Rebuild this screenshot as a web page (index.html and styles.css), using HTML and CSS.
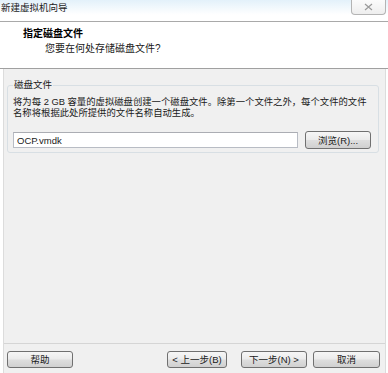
FILE: index.html
```html
<!DOCTYPE html>
<html lang="zh-CN">
<head>
    <meta charset="UTF-8">
    <title>新建虚拟机向导</title>
    <link rel="stylesheet" href="styles.css">
</head>
<body>
    <div class="titlebar">
        <span class="title">新建虚拟机向导</span>
        <span class="close">
            <svg width="9" height="8" viewBox="0 0 9 8">
                <path d="M1 1 L8 7 M8 1 L1 7" stroke="#9a9a9a" stroke-width="1.2" fill="none"/>
            </svg>
        </span>
    </div>

    <div class="header">
        <div class="header-title">指定磁盘文件</div>
        <div class="header-sub">您要在何处存储磁盘文件?</div>
    </div>

    <div class="body">
        <div class="panel">
            <fieldset class="group">
                <legend>磁盘文件</legend>
                <p class="desc">将为每 2 GB 容量的虚拟磁盘创建一个磁盘文件。除第一个文件之外，每个文件的文件<br>名称将根据此处所提供的文件名称自动生成。</p>
                <div class="file-row">
                    <input class="file-input" type="text" value="OCP.vmdk">
                    <button class="btn browse">浏览(R)...</button>
                </div>
            </fieldset>
        </div>
        <div class="footer">
            <button class="btn help">帮助</button>
            <button class="btn prev">&lt; 上一步(B)</button>
            <button class="btn next">下一步(N) &gt;</button>
            <button class="btn cancel">取消</button>
        </div>
    </div>
</body>
</html>
```

FILE: styles.css
```css
* {
    margin: 0;
    padding: 0;
    box-sizing: border-box;
}
body {
    background: #fff;
    font-family: "Liberation Sans", "Noto Sans CJK SC", sans-serif;
    font-size: 9.5px;
    color: #1a1a1a;
    width: 388px;
    height: 373px;
    overflow: hidden;
}
.titlebar {
    position: relative;
    height: 22px;
    background: linear-gradient(#e3f1fa, #ffffff 70%);
    border-bottom: 1px solid #a9a9a9;
}
.title {
    display: block;
    padding-left: 1px;
    line-height: 16px;
    color: #222;
}
.close {
    position: absolute;
    top: 0;
    right: 2px;
    width: 35px;
    height: 15px;
    border: 1px solid #b4b4b4;
    border-top: none;
    border-radius: 0 0 4px 4px;
    background: linear-gradient(#fbfbfb, #eeeeee);
    display: flex;
    align-items: center;
    justify-content: center;
}
.header {
    height: 47px;
    background: #fff;
    padding: 6px 0 0 23px;
    border-bottom: 1px solid #a0a0a0;
}
.header-title {
    font-weight: bold;
    font-size: 10px;
    line-height: 12px;
    color: #000;
}
.header-sub {
    margin: 3px 0 0 22px;
    line-height: 12px;
    font-size: 10px;
}
.body {
    margin: 0 2px 0 3px;
    height: 305px;
    background: #f0f0f0;
    border-left: 1px solid #dcdcdc;
    border-right: 1px solid #dcdcdc;
}
.panel {
    height: 274px;
    padding: 10px 6px 0 3px;
}
.group {
    border: 1px solid #d8dfe4;
    border-radius: 3px;
    padding: 0 7px 3px 5px;
    min-width: 0;
}
.group legend {
    padding: 0 1px;
    line-height: 12px;
}
.desc {
    margin-top: 6px;
    font-size: 9.35px;
    line-height: 10.5px;
    white-space: nowrap;
}
.file-row {
    display: flex;
    align-items: center;
    margin-top: 13px;
}
.file-input {
    width: 286px;
    height: 16px;
    border: 1px solid #b8bcc4;
    border-top-color: #abadb3;
    background: #fff;
    font: inherit;
    padding-left: 3px;
    color: #1a1a1a;
    outline: none;
}
.btn {
    height: 17px;
    border: 1px solid #707070;
    border-radius: 3px;
    background: linear-gradient(#f6f6f6 0%, #ebebeb 48%, #dedede 52%, #d0d0d0 100%);
    font: inherit;
    color: #1a1a1a;
    line-height: 15px;
    text-align: center;
}
.browse {
    width: 66px;
    height: 18px;
    margin-left: 7px;
}
.footer {
    display: flex;
    border-top: 1px solid #d5d5d5;
    padding: 7px 5px 0 3px;
}
.help {
    width: 66px;
}
.prev {
    width: 60px;
    margin-left: auto;
}
.next {
    width: 66px;
    margin-left: 14px;
}
.cancel {
    width: 67px;
    margin-left: 6px;
}
```
